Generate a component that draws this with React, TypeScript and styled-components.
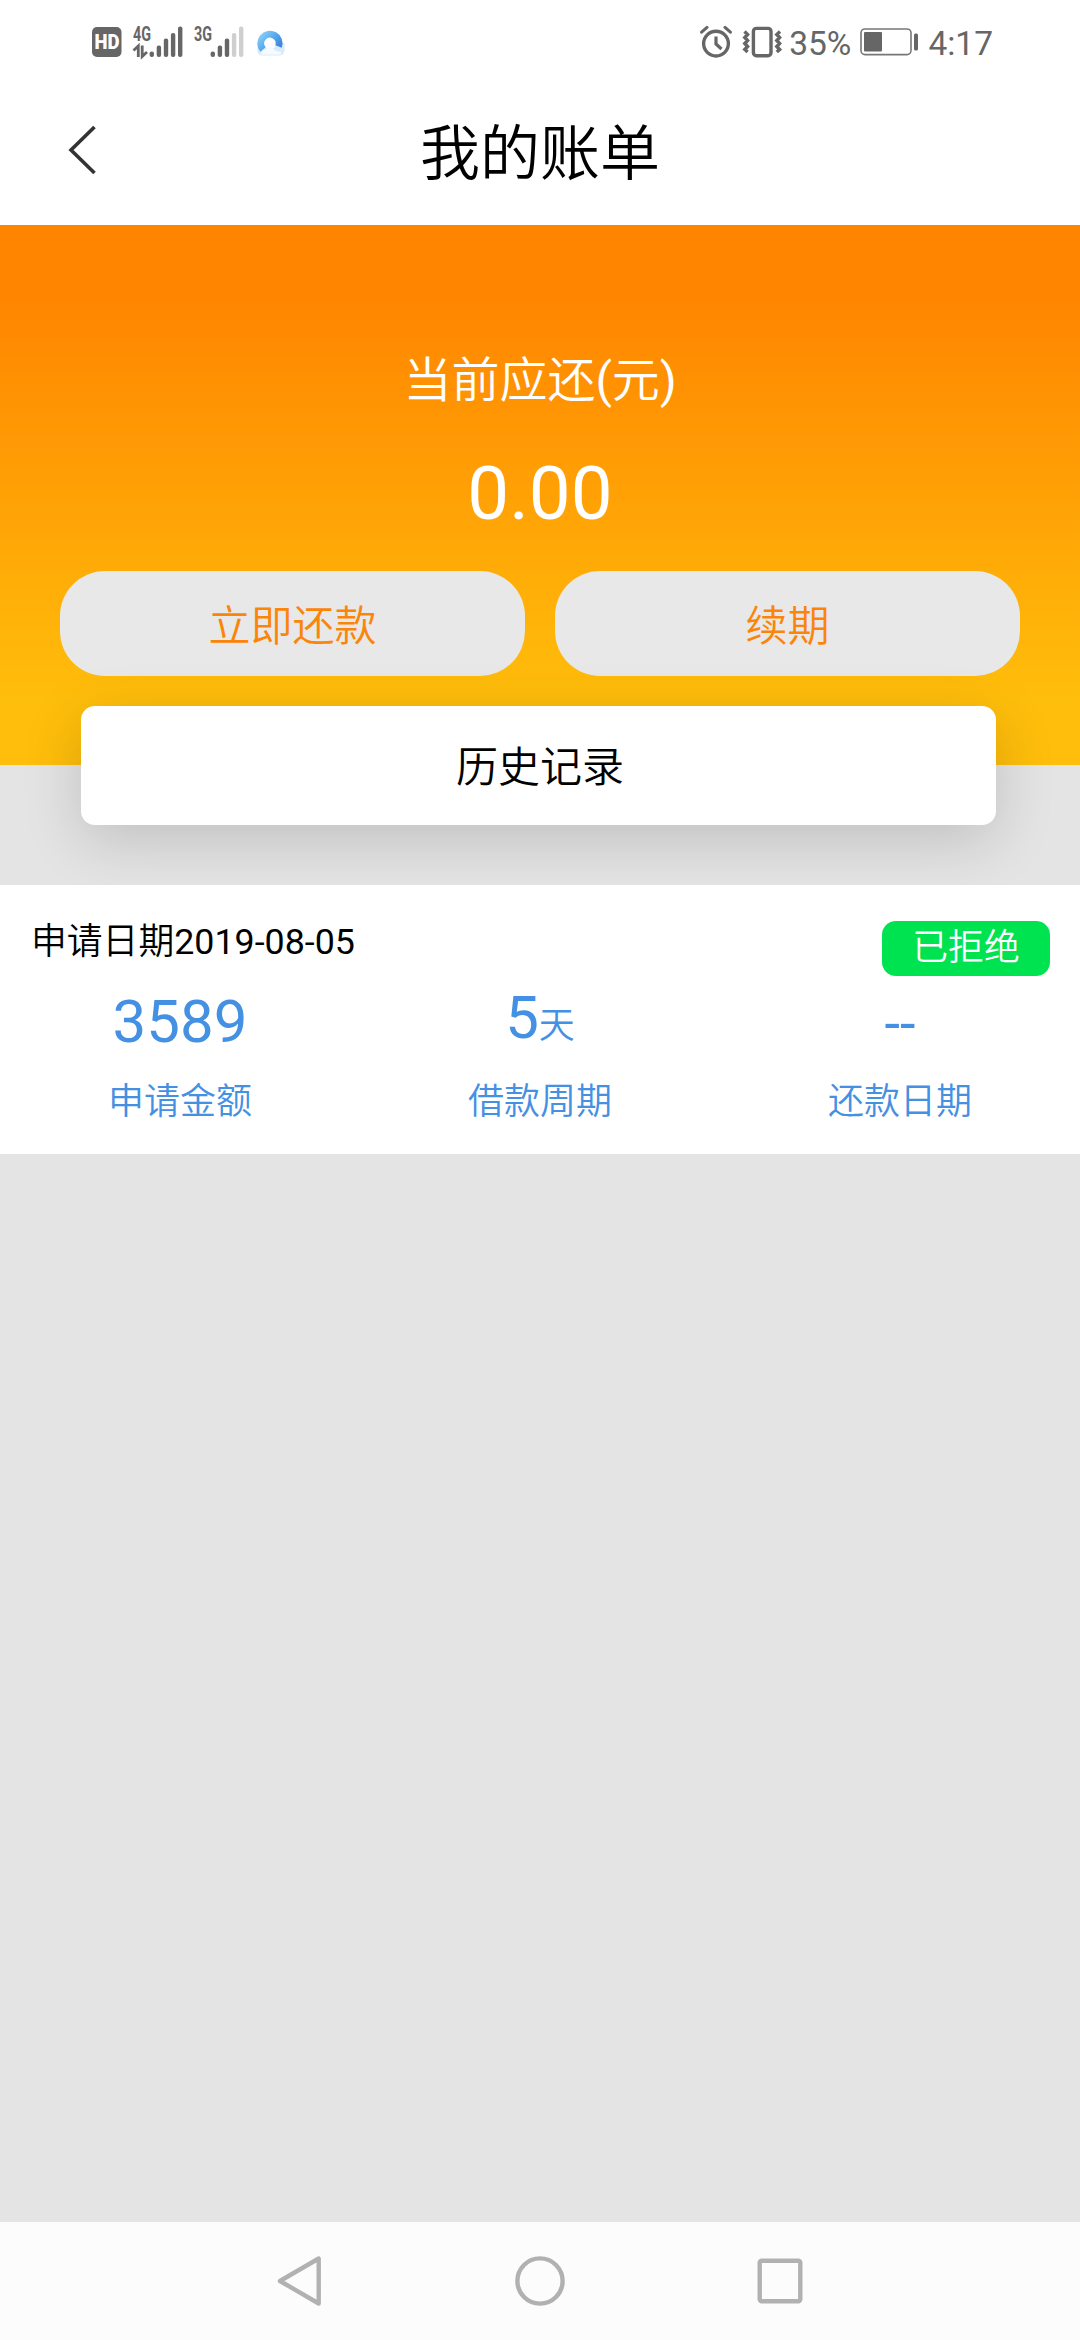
import React from "react";
import styled, { createGlobalStyle } from "styled-components";

const GlobalStyle = createGlobalStyle`
  * { box-sizing: border-box; }
  body {
    margin: 0;
    background: #e4e4e4;
    font-family: Roboto, "Noto Sans CJK SC", sans-serif;
    color: #000;
  }
`;

const Screen = styled.div`
  display: flex;
  flex-direction: column;
  width: 1080px;
  height: 2340px;
  overflow: hidden;
  background: #e4e4e4;
`;

const StatusBar = styled.div`
  display: flex;
  justify-content: space-between;
  align-items: center;
  flex: none;
  height: 84px;
  padding: 0 87px 0 91px;
  background: #fff;
  color: #666;
`;

const StatusGroup = styled.div`
  display: flex;
  align-items: center;
  height: 84px;
`;

const StatusText = styled.span<{ $left: number }>`
  margin-left: ${(p) => p.$left}px;
  font-size: 33.5px;
  line-height: 40px;
  padding-top: 4px;
`;

const Glyph = styled.svg<{ $left?: number }>`
  display: block;
  flex: none;
  margin-left: ${(p) => p.$left ?? 0}px;
`;

const Header = styled.header`
  display: grid;
  grid-template-columns: 160px 1fr 160px;
  align-items: center;
  flex: none;
  height: 141px;
  padding-bottom: 10px;
  background: #fff;
`;

const BackButton = styled.button`
  display: flex;
  padding: 0 0 0 66px;
  border: 0;
  background: none;
`;

const Title = styled.h1`
  margin: 0;
  text-align: center;
  font-size: 60px;
  font-weight: 350;
  line-height: 72px;
  padding-top: 11px;
`;

const Hero = styled.section`
  display: flex;
  flex-direction: column;
  align-items: center;
  flex: none;
  height: 540px;
  padding: 121px 60px 0;
  background: linear-gradient(#ff8400 12%, #ffbe0b 88%);
  color: #fff;
`;

const HeroLabel = styled.div`
  font-size: 48px;
  font-weight: 350;
  line-height: 70px;
`;

const Paren = styled.span`
  font-weight: 400;
`;

const HeroAmount = styled.div`
  margin-top: 34px;
  font-size: 74.5px;
  line-height: 88px;
`;

const Actions = styled.div`
  display: grid;
  grid-template-columns: 1fr 1fr;
  gap: 30px;
  width: 100%;
  margin-top: 33px;
`;

const PillButton = styled.button`
  height: 105px;
  padding: 6px 0 0;
  border: 0;
  border-radius: 45px;
  background: #e8e8e8;
  color: #fb8509;
  font-family: Roboto, "Noto Sans CJK SC", sans-serif;
  font-size: 42px;
  font-weight: 350;
  line-height: 60px;
`;

const HistoryCard = styled.div`
  flex: none;
  position: relative;
  width: 915px;
  height: 119px;
  margin: -59px 0 60px 80.5px;
  padding-left: 4px;
  border-radius: 14px;
  background: #fff;
  box-shadow: 0 15px 60px rgba(0, 0, 0, 0.16);
  text-align: center;
  font-size: 42px;
  font-weight: 350;
  line-height: 124px;
`;

const Record = styled.article`
  flex: none;
  position: relative;
  height: 269px;
  background: #fff;
`;

const RecordHead = styled.div`
  display: flex;
  justify-content: space-between;
  height: 98px;
  padding: 36px 30px 0 31px;
`;

const RecordDate = styled.div`
  font-size: 35.8px;
  line-height: 43px;
`;

const DateCaption = styled.span`
  font-weight: 350;
`;

const Badge = styled.div`
  width: 168px;
  height: 55px;
  border-radius: 14px;
  background: #00e350;
  color: #fff;
  text-align: center;
  font-size: 35.8px;
  font-weight: 350;
  line-height: 55px;
`;

const Stats = styled.div`
  display: grid;
  grid-template-columns: repeat(3, 1fr);
  color: #4490e2;
`;

const Stat = styled.div`
  display: flex;
  flex-direction: column;
  align-items: center;
`;

const StatValue = styled.div<{ $raise?: number; $size?: number }>`
  height: 92px;
  padding-top: ${(p) => 4 - (p.$raise ?? 0)}px;
  font-size: ${(p) => p.$size ?? 60}px;
  line-height: 70px;
`;

const Unit = styled.span`
  font-size: 36px;
  font-weight: 350;
  line-height: 1;
`;

const StatLabel = styled.div`
  font-size: 36px;
  font-weight: 350;
  line-height: 54px;
`;

const NavBar = styled.nav`
  display: grid;
  grid-template-columns: repeat(3, 240px);
  justify-content: center;
  justify-items: center;
  align-items: center;
  flex: none;
  height: 118px;
  margin-top: auto;
  background: #fcfcfc;
`;

const SmallTag = ({ children }: { children: string }) => (
  <text
    x="1"
    y="15.5"
    fontFamily="Roboto, sans-serif"
    fontWeight="700"
    fontSize="19.5"
    fill="#666"
    textLength="18"
    lengthAdjust="spacingAndGlyphs"
  >
    {children}
  </text>
);

const barTops = [26.5, 20.5, 13.5, 8, 1.5];

const Bars = ({ x, strong }: { x: number; strong: number }) => (
  <>
    {barTops.map((top, i) => (
      <rect
        key={top}
        x={x + i * 7.1}
        y={top}
        width="4.4"
        height={32 - top}
        rx="2"
        fill={i < strong ? "#666" : "#cfcfcf"}
      />
    ))}
  </>
);

const HdIcon = () => (
  <Glyph width="31" height="32" viewBox="0 0 31 32">
    <rect x="1" y="1" width="29.5" height="30" rx="5" fill="#666" />
    <text
      x="3.6"
      y="22.8"
      fontFamily="Roboto, sans-serif"
      fontWeight="900"
      fontSize="20"
      fill="#fff"
      textLength="25"
      lengthAdjust="spacingAndGlyphs"
    >
      HD
    </text>
  </Glyph>
);

const Signal4G = () => (
  <Glyph $left={10} width="52" height="46" viewBox="0 -6 52 46">
    <SmallTag>4G</SmallTag>
    <path d="M1.5 25.5L6.3 21V32M10.2 20.5V31.5L15 27" fill="none" stroke="#666" strokeWidth="2.8" />
    <Bars x={17.6} strong={5} />
  </Glyph>
);

const Signal3G = () => (
  <Glyph $left={9} width="52" height="46" viewBox="0 -6 52 46">
    <SmallTag>3G</SmallTag>
    <Bars x={17.6} strong={3} />
  </Glyph>
);

const CloudIcon = () => (
  <Glyph $left={11} width="32" height="30" viewBox="0 0 32 30">
    <defs>
      <linearGradient id="ring" x1="0" y1="0" x2="1" y2="0.8">
        <stop offset="0" stopColor="#86cdf5" />
        <stop offset="0.5" stopColor="#5aaaf0" />
        <stop offset="1" stopColor="#3f86d8" />
      </linearGradient>
    </defs>
    <path d="M2.5 17Q-1 28 6 28.5H24Q30 28 28.5 16Z" fill="#d9ebfb" />
    <circle cx="14" cy="16" r="6.5" fill="#fbfdff" />
    <path d="M7 22.5A9.2 9.2 0 1 1 22.6 19.5" fill="none" stroke="url(#ring)" strokeWidth="7" />
    <path d="M5 27.5Q5 22.5 10.5 22Q13 19 16.5 21.5Q19 24.5 25 25Q25.5 27.5 23 27.5Z" fill="#f6fbff" />
  </Glyph>
);

const AlarmIcon = () => (
  <Glyph width="32" height="34" viewBox="0 0 32 34" fill="none" stroke="#666">
    <circle cx="16" cy="18.6" r="12.4" strokeWidth="3.4" />
    <path d="M16 11.5V19L21.5 24" strokeWidth="3.2" />
    <path d="M1.6 7.2L7 2.4M30.4 7.2L25 2.4" strokeWidth="3" strokeLinecap="round" />
  </Glyph>
);

const VibrateIcon = () => (
  <Glyph $left={10} width="40" height="34" viewBox="0 0 40 34" fill="none" stroke="#666">
    <rect x="11.4" y="3.4" width="17.6" height="27.4" rx="3" strokeWidth="3.4" />
    <path
      d="M2.5 6.5L5.6 9.5L2.8 12.5L5.6 15.5L2.8 18.5L5.6 21.5L2.8 24.5L5.6 27M38 6.5L34.8 9.5L37.6 12.5L34.8 15.5L37.6 18.5L34.8 21.5L37.6 24.5L34.8 27"
      strokeWidth="3.4"
    />
  </Glyph>
);

const BatteryIcon = () => (
  <Glyph $left={9} width="60" height="30" viewBox="0 0 60 30">
    <rect x="1" y="2" width="50" height="25.6" rx="4" fill="none" stroke="#777" strokeWidth="1.6" />
    <rect x="4" y="5" width="18" height="19.6" rx="1" fill="#666" />
    <rect x="54" y="6.5" width="4" height="17" rx="1.5" fill="#666" />
  </Glyph>
);

const stats: { label: string; value: string; unit?: string; raise?: number; size?: number }[] = [
  { label: "申请金额", value: "3589" },
  { label: "借款周期", value: "5", unit: "天", raise: 4 },
  { label: "还款日期", value: "--", size: 56, raise: -2 },
];

export default function App() {
  return (
    <>
      <GlobalStyle />
      <Screen>
        <StatusBar>
          <StatusGroup>
            <HdIcon />
            <Signal4G />
            <Signal3G />
            <CloudIcon />
          </StatusGroup>
          <StatusGroup>
            <AlarmIcon />
            <VibrateIcon />
            <StatusText $left={7}>35%</StatusText>
            <BatteryIcon />
            <StatusText $left={8}>4:17</StatusText>
          </StatusGroup>
        </StatusBar>
        <Header>
          <BackButton aria-label="返回">
            <Glyph width="32" height="50" viewBox="0 0 32 50">
              <path d="M28.5 2L5 25L28.5 48" fill="none" stroke="#333" strokeWidth="3.6" />
            </Glyph>
          </BackButton>
          <Title>我的账单</Title>
        </Header>
        <Hero>
          <HeroLabel>
            当前应还<Paren>(</Paren>元<Paren>)</Paren>
          </HeroLabel>
          <HeroAmount>0.00</HeroAmount>
          <Actions>
            <PillButton>立即还款</PillButton>
            <PillButton>续期</PillButton>
          </Actions>
        </Hero>
        <HistoryCard>历史记录</HistoryCard>
        <Record>
          <RecordHead>
            <RecordDate>
              <DateCaption>申请日期</DateCaption>2019-08-05
            </RecordDate>
            <Badge>已拒绝</Badge>
          </RecordHead>
          <Stats>
            {stats.map((s) => (
              <Stat key={s.label}>
                <StatValue $raise={s.raise} $size={s.size}>
                  {s.value}
                  {s.unit && <Unit>{s.unit}</Unit>}
                </StatValue>
                <StatLabel>{s.label}</StatLabel>
              </Stat>
            ))}
          </Stats>
        </Record>
        <NavBar>
          <Glyph width="50" height="54" viewBox="0 0 50 54">
            <path d="M5 27L43.7 4.5V49.5Z" fill="none" stroke="#b1b1b1" strokeWidth="4.4" strokeLinejoin="round" />
          </Glyph>
          <Glyph width="54" height="54" viewBox="0 0 54 54">
            <circle cx="27" cy="27" r="22.6" fill="none" stroke="#b1b1b1" strokeWidth="4.4" />
          </Glyph>
          <Glyph width="54" height="54" viewBox="0 0 54 54">
            <rect x="6.7" y="6.7" width="40.6" height="40.6" rx="2" fill="none" stroke="#b1b1b1" strokeWidth="4.4" />
          </Glyph>
        </NavBar>
      </Screen>
    </>
  );
}
